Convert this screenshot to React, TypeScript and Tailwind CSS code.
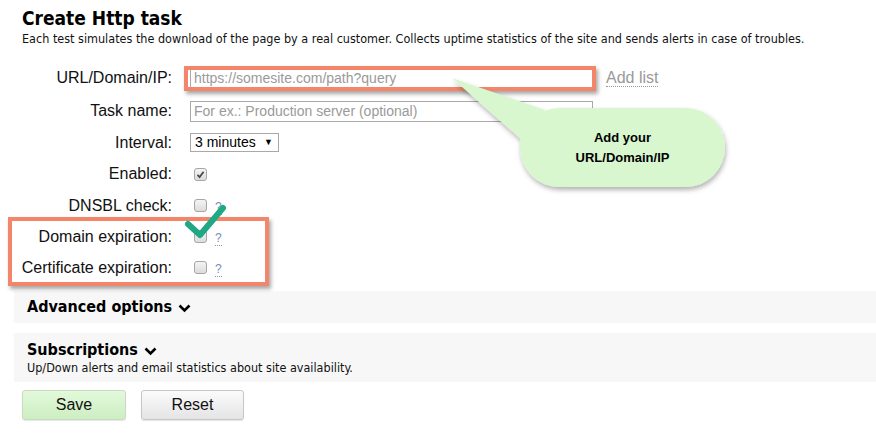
import React from 'react';

const labelFont = { fontFamily: '"Liberation Sans", Arial, sans-serif' };
const tahoma = { fontFamily: '"DejaVu Sans Condensed", "DejaVu Sans", Tahoma, sans-serif' };

function Checkbox({ checked = false }: { checked?: boolean }) {
  return (
    <span className="relative ml-[4px] inline-flex h-[13px] w-[13px] items-center justify-center rounded-[3px] border border-[#a6a6a6] bg-gradient-to-b from-[#f4f4f4] to-[#dcdcdc]">
      {checked && (
        <svg width="9" height="9" viewBox="0 0 9 9">
          <path d="M1.5 4.8 L3.6 7 L7.6 1.8" fill="none" stroke="#4a4a4a" strokeWidth="1.8" />
        </svg>
      )}
    </span>
  );
}

function Help() {
  return (
    <span
      className="ml-[8px] mt-[4px] border-b border-dotted border-[#8a9bb0] text-[12px] leading-[13px] text-[#6f8fb4]"
      style={labelFont}
    >
      ?
    </span>
  );
}

function Row({ label, h, children }: { label: string; h: string; children: React.ReactNode }) {
  return (
    <div className={`flex items-center ${h}`}>
      <div className="w-[172px] text-right text-[16px] text-[#111]" style={labelFont}>
        {label}
      </div>
      <div className="ml-[18px] flex items-center">{children}</div>
    </div>
  );
}

export default function App() {
  return (
    <div className="relative h-[434px] w-[876px] overflow-hidden bg-white text-black">
      <div className="pl-[22px] pt-[6px]" style={tahoma}>
        <h1 className="text-[19px] font-bold leading-[24px]">Create Http task</h1>
        <p className="mt-[1px] text-[12.5px] leading-[16px] text-[#111]">
          Each test simulates the download of the page by a real customer. Collects uptime statistics of the site and
          sends alerts in case of troubles.
        </p>
      </div>

      <div className="mt-[14px] flex flex-col">
        <Row label="URL/Domain/IP:" h="h-[34px]">
          <input
            readOnly
            placeholder="https://somesite.com/path?query"
            className="h-[21px] w-[403px] border border-[#a9a9a9] px-[3px] text-[14px] outline-none placeholder:text-[#9a9a9a]"
            style={labelFont}
          />
          <span
            className="ml-[13px] border-b border-dotted border-[#999] text-[16px] leading-[17px] text-[#999]"
            style={labelFont}
          >
            Add list
          </span>
        </Row>
        <Row label="Task name:" h="h-[32px]">
          <input
            readOnly
            placeholder="For ex.: Production server (optional)"
            className="h-[21px] w-[403px] border border-[#a9a9a9] px-[3px] text-[14px] outline-none placeholder:text-[#9a9a9a]"
            style={labelFont}
          />
        </Row>
        <Row label="Interval:" h="h-[31px]">
          <div
            className="flex h-[19px] w-[89px] items-center justify-between border border-[#a9a9a9] pl-[4px] pr-[5px] text-[14px]"
            style={labelFont}
          >
            <span>3 minutes</span>
            <span className="text-[9px]">▼</span>
          </div>
        </Row>
        <Row label="Enabled:" h="h-[32px]">
          <Checkbox checked />
        </Row>
        <Row label="DNSBL check:" h="h-[31px]">
          <Checkbox />
          <Help />
        </Row>
        <Row label="Domain expiration:" h="h-[31px]">
          <Checkbox />
          <Help />
        </Row>
        <Row label="Certificate expiration:" h="h-[31px]">
          <Checkbox />
          <Help />
        </Row>
      </div>

      <div className="ml-[14px] mt-[8px] flex h-[32px] items-center bg-[#f7f7f7] pl-[13px]" style={tahoma}>
        <span className="text-[16px] font-bold">Advanced options</span>
        <svg className="ml-[6px] mt-[2px]" width="13" height="9" viewBox="0 0 13 9">
          <path d="M1.5 1.5 L6.5 6.5 L11.5 1.5" fill="none" stroke="#000" strokeWidth="2.6" />
        </svg>
      </div>

      <div className="ml-[14px] mt-[10px] h-[49px] bg-[#f7f7f7] pl-[13px] pt-[7px]" style={tahoma}>
        <div className="flex items-center">
          <span className="text-[16px] font-bold leading-[20px]">Subscriptions</span>
          <svg className="ml-[6px] mt-[2px]" width="13" height="9" viewBox="0 0 13 9">
            <path d="M1.5 1.5 L6.5 6.5 L11.5 1.5" fill="none" stroke="#000" strokeWidth="2.6" />
          </svg>
        </div>
        <p className="text-[12.5px] leading-[15px] text-[#111]">
          Up/Down alerts and email statistics about site availability.
        </p>
      </div>

      <div className="ml-[22px] mt-[8px] flex gap-[15px]" style={labelFont}>
        <button className="h-[30px] w-[104px] rounded-[3px] border border-[#c9d9c2] bg-gradient-to-b from-[#e2f9da] to-[#cdeec2] text-[16px] text-[#111] shadow-[0_1px_1px_rgba(0,0,0,0.1)]">
          Save
        </button>
        <button className="h-[30px] w-[103px] rounded-[3px] border border-[#c6c6c6] bg-gradient-to-b from-[#fbfbfb] to-[#e4e4e4] text-[16px] text-[#111] shadow-[0_1px_1px_rgba(0,0,0,0.1)]">
          Reset
        </button>
      </div>

      {/* annotation overlays */}
      <div className="pointer-events-none absolute left-[184px] top-[66px] h-[25px] w-[412px] border-[4px] border-[#f3866a] shadow-[2px_3px_4px_rgba(0,0,0,0.35)]" />
      <div className="pointer-events-none absolute left-[8px] top-[217px] h-[69px] w-[261px] border-[4px] border-[#f3866a] shadow-[2px_3px_4px_rgba(0,0,0,0.35)]" />

      <svg className="pointer-events-none absolute left-0 top-0" width="876" height="434" viewBox="0 0 876 434">
        <defs>
          <filter id="sh" x="-20%" y="-20%" width="140%" height="150%">
            <feDropShadow dx="1" dy="3" stdDeviation="2.5" floodColor="#000" floodOpacity="0.3" />
          </filter>
        </defs>
        <g filter="url(#sh)" fill="#d8f7cf">
          <path d="M559.5 108 H685.5 A39.5 39.5 0 0 1 685.5 187 H559.5 A39.5 39.5 0 0 1 559.5 108 Z" />
          <path d="M545 110 L452 78 L522 140 Z" />
        </g>
        <path d="M559.5 108.5 H685.5 A39 39 0 0 1 685.5 186.5 H559.5 A39 39 0 0 1 530 122 Z" fill="#d8f7cf" />
        <path d="M188 224 L200 235 L223 208" fill="none" stroke="#1ea886" strokeWidth="6" strokeLinecap="round" strokeLinejoin="round" />
      </svg>

      <div
        className="pointer-events-none absolute left-[540px] top-[128px] w-[165px] text-center text-[13px] font-bold leading-[20px]"
        style={labelFont}
      >
        Add your
        <br />
        URL/Domain/IP
      </div>
    </div>
  );
}
